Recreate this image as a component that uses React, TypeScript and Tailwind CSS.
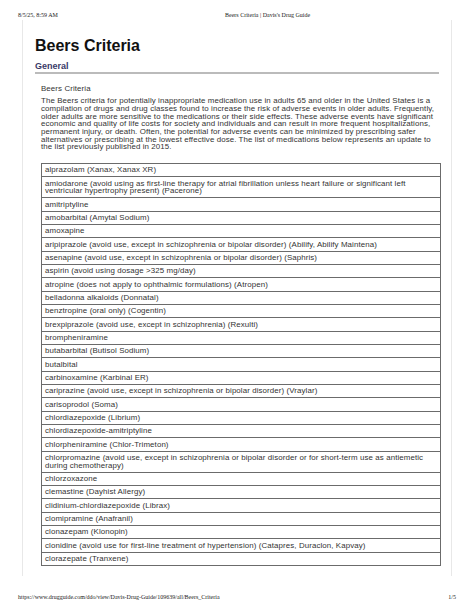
import React from "react";

const rows: string[][] = [
  ["alprazolam (Xanax, Xanax XR)"],
  [
    "amiodarone (avoid using as first-line therapy for atrial fibrillation unless heart failure or significant left",
    "ventricular hypertrophy present) (Pacerone)",
  ],
  ["amitriptyline"],
  ["amobarbital (Amytal Sodium)"],
  ["amoxapine"],
  ["aripiprazole (avoid use, except in schizophrenia or bipolar disorder) (Abilify, Abilify Maintena)"],
  ["asenapine (avoid use, except in schizophrenia or bipolar disorder) (Saphris)"],
  ["aspirin (avoid using dosage >325 mg/day)"],
  ["atropine (does not apply to ophthalmic formulations) (Atropen)"],
  ["belladonna alkaloids (Donnatal)"],
  ["benztropine (oral only) (Cogentin)"],
  ["brexpiprazole (avoid use, except in schizophrenia) (Rexulti)"],
  ["brompheniramine"],
  ["butabarbital (Butisol Sodium)"],
  ["butalbital"],
  ["carbinoxamine (Karbinal ER)"],
  ["cariprazine (avoid use, except in schizophrenia or bipolar disorder) (Vraylar)"],
  ["carisoprodol (Soma)"],
  ["chlordiazepoxide (Librium)"],
  ["chlordiazepoxide-amitriptyline"],
  ["chlorpheniramine (Chlor-Trimeton)"],
  [
    "chlorpromazine (avoid use, except in schizophrenia or bipolar disorder or for short-term use as antiemetic",
    "during chemotherapy)",
  ],
  ["chlorzoxazone"],
  ["clemastine (Dayhist Allergy)"],
  ["clidinium-chlordiazepoxide (Librax)"],
  ["clomipramine (Anafranil)"],
  ["clonazepam (Klonopin)"],
  ["clonidine (avoid use for first-line treatment of hypertension) (Catapres, Duraclon, Kapvay)"],
  ["clorazepate (Tranxene)"],
];

const para = [
  "The Beers criteria for potentially inappropriate medication use in adults 65 and older in the United States is a",
  "compilation of drugs and drug classes found to increase the risk of adverse events in older adults. Frequently,",
  "older adults are more sensitive to the medications or their side effects. These adverse events have significant",
  "economic and quality of life costs for society and individuals and can result in more frequent hospitalizations,",
  "permanent injury, or death. Often, the potential for adverse events can be minimized by prescribing safer",
  "alternatives or prescribing at the lowest effective dose. The list of medications below represents an update to",
  "the list previously published in 2015.",
];

export default function App() {
  return (
    <div className="w-[474px] h-[613px] bg-white overflow-hidden flex flex-col">
      <div
        className="h-[20px] pt-[11px] px-[18px] flex text-[6px] leading-[8px] text-[#222]"
        style={{ fontFamily: '"Liberation Serif", serif' }}
      >
        <div className="w-[207px] whitespace-nowrap">8/5/25, 8:59 AM</div>
        <div className="whitespace-nowrap">Beers Criteria | Davis's Drug Guide</div>
      </div>

      <div
        className="mx-[22px] w-[430px] border-x border-[#e8e8e8] pt-[17px] px-[12px] pb-[10px]"
        style={{ fontFamily: '"Liberation Sans", Arial, sans-serif' }}
      >
        <div className="text-[16px] leading-[18px] font-bold text-[#111]">Beers Criteria</div>
        <div className="mt-[6px] text-[9px] leading-[10px] font-bold text-[#3a3a68]">General</div>
        <div className="mt-[1px] h-[2px] bg-[#bbbbbb]" />

        <div className="px-[6px] text-[7.9px] leading-[7.67px] tracking-[0.1px] text-[#333]">
          <div className="mt-[11px] whitespace-nowrap">Beers Criteria</div>
          <div className="mt-[4.7px]">
            {para.map((l, i) => (
              <div key={i} className="whitespace-nowrap">
                {l}
              </div>
            ))}
          </div>

          <div className="mt-[12px] w-[400px] border-t border-x border-[#6b6b6b]">
            {rows.map((r, i) => (
              <div key={i} className="border-b border-[#6b6b6b] px-[3px] py-[2.33px]">
                {r.map((l, j) => (
                  <div key={j} className="whitespace-nowrap">
                    {l}
                  </div>
                ))}
              </div>
            ))}
          </div>
        </div>
      </div>

      <div
        className="mt-[17px] px-[18px] flex justify-between text-[6px] leading-[8px] text-[#222]"
        style={{ fontFamily: '"Liberation Serif", serif' }}
      >
        <div className="whitespace-nowrap">
          https://www.drugguide.com/ddo/view/Davis-Drug-Guide/109639/all/Beers_Criteria
        </div>
        <div>1/5</div>
      </div>
    </div>
  );
}
